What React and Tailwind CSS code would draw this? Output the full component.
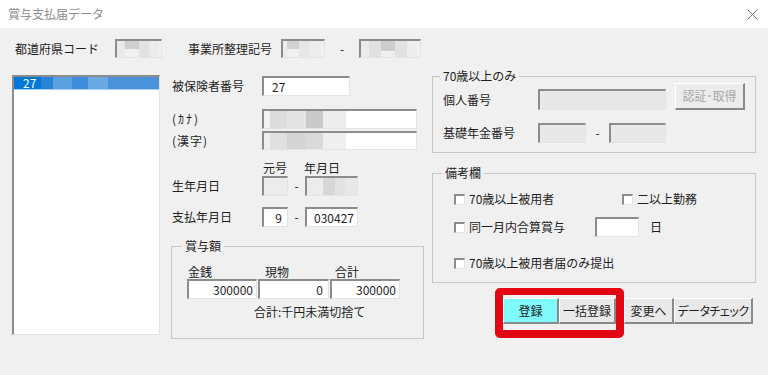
import React from "react";

const sunken =
  "box-border border-t-2 border-l-2 border-t-[#8c8c8c] border-l-[#8c8c8c] border-b border-r border-b-[#e4e4e4] border-r-[#e4e4e4]";
const raised =
  "box-border border-t border-l border-t-white border-l-white border-b-2 border-r-2 border-b-[#8a8a8a] border-r-[#8a8a8a]";

function Blocks({ items }) {
  return (
    <div className="flex h-full w-full">
      {items.map((c, i) => (
        <div key={i} className={c} />
      ))}
    </div>
  );
}

function Check({ label, className = "" }) {
  return (
    <div className={`flex items-center ${className}`}>
      <div className={`w-[11px] h-[11px] bg-white ${sunken}`} />
      <span className="ml-[4px] leading-[14px]">{label}</span>
    </div>
  );
}

export default function App() {
  return (
    <div className="w-[768px] h-[375px] overflow-hidden font-['Noto_Sans_CJK_JP','Noto_Sans',sans-serif] text-[12px] leading-[14px] text-[#1e1e1e]">
      {/* title bar */}
      <div className="h-[28px] bg-white flex items-center justify-between pl-[8px] pr-[10px]">
        <span className="text-[#8c8c8c] text-[12px]">賞与支払届データ</span>
        <svg width="11" height="11" viewBox="0 0 11 11">
          <path d="M0.5 0.5 L10.5 10.5 M10.5 0.5 L0.5 10.5" stroke="#707070" strokeWidth="1" fill="none" />
        </svg>
      </div>

      <div className="h-[347px] bg-[#f0f0f0] flex flex-col">
        {/* top row */}
        <div className="mt-[11px] h-[19px] flex items-center pl-[15px]">
          <span className="w-[100px]">都道府県コード</span>
          <div className={`w-[47px] h-[19px] bg-[#f0f0f0] ${sunken}`}>
            <Blocks
              items={[
                "w-[8px] bg-[#e9e9e9]",
                "w-[14px] bg-[#cfcfcf] h-[8px]",
                "w-[10px] bg-[#e2e2e2]",
                "w-[10px] bg-[#ececec]",
              ]}
            />
          </div>
          <span className="ml-[26px] w-[93px]">事業所整理記号</span>
          <div className={`w-[44px] h-[19px] bg-[#f0f0f0] ${sunken}`}>
            <Blocks
              items={[
                "w-[4px] bg-[#ececec]",
                "w-[12px] bg-[#d2d2d2] h-[8px]",
                "w-[10px] bg-[#e6e6e6]",
                "w-[12px] bg-[#ececec]",
              ]}
            />
          </div>
          <span className="w-[34px] text-center">-</span>
          <div className={`w-[62px] h-[19px] bg-[#f0f0f0] ${sunken}`}>
            <Blocks
              items={[
                "w-[8px] bg-[#ebebeb]",
                "w-[12px] bg-[#e0e0e0]",
                "w-[14px] bg-[#cdcdcd] h-[10px]",
                "w-[12px] bg-[#e2e2e2]",
                "w-[10px] bg-[#ededed]",
              ]}
            />
          </div>
        </div>

        {/* main */}
        <div className="mt-[11px] flex items-start">
          {/* list */}
          <div className={`ml-[12px] mt-[6px] w-[148px] h-[260px] bg-white ${sunken}`}>
            <div className="flex h-[12px] bg-[#0078d7] text-white leading-[12px]">
              <span className="pl-[9px] w-[27px]">27</span>
              <div className="w-[12px] bg-[#2a82d8]" />
              <div className="w-[19px] bg-[#5aa0e0]" />
              <div className="w-[16px] bg-[#3d8ddb]" />
              <div className="w-[20px] bg-[#6aa9e2]" />
              <div className="flex-1 bg-[#4a93da]" />
            </div>
            <div className="h-[1px] bg-[#a8d0f0]" />
          </div>

          {/* middle column */}
          <div className="ml-[11px] w-[253px] flex flex-col">
            <div className="mt-[7px] h-[20px] flex items-center">
              <span className="pl-[1px] w-[91px]">被保険者番号</span>
              <div className={`w-[88px] h-[20px] bg-white pl-[8px] flex items-center ${sunken}`}>27</div>
            </div>
            <div className="mt-[13px] h-[20px] flex items-center">
              <span className="pl-[1px] w-[91px] tracking-[2px]">(ｶﾅ)</span>
              <div className={`w-[155px] h-[20px] bg-white ${sunken}`}>
                <Blocks
                  items={[
                    "w-[6px] bg-[#f2f2f2]",
                    "w-[17px] bg-[#dcdcdc]",
                    "w-[19px] bg-[#e4e4e4]",
                    "w-[17px] bg-[#c9c9c9]",
                    "w-[23px] bg-[#ececec]",
                  ]}
                />
              </div>
            </div>
            <div className="mt-[2px] h-[19px] flex items-center">
              <span className="pl-[1px] w-[91px] tracking-[1px]">(漢字)</span>
              <div className={`w-[155px] h-[19px] bg-white ${sunken}`}>
                <Blocks
                  items={[
                    "w-[6px] bg-[#efefef]",
                    "w-[17px] bg-[#e0e0e0]",
                    "w-[19px] bg-[#d5d5d5]",
                    "w-[17px] bg-[#dadada]",
                    "w-[23px] bg-[#efefef]",
                  ]}
                />
              </div>
            </div>
            <div className="mt-[11px] h-[14px] flex">
              <span className="w-[92px]" />
              <span className="w-[41px]">元号</span>
              <span>年月日</span>
            </div>
            <div className="h-[20px] mt-[1px] flex items-center">
              <span className="pl-[1px] w-[91px]">生年月日</span>
              <div className={`w-[26px] h-[20px] bg-[#ececec] ${sunken}`} />
              <span className="w-[17px] text-center">-</span>
              <div className={`w-[53px] h-[20px] bg-[#ececec] ${sunken}`}>
                <Blocks
                  items={[
                    "w-[16px] bg-[#ececec]",
                    "w-[12px] bg-[#d7d7d7]",
                    "w-[10px] bg-[#e2e2e2]",
                    "w-[12px] bg-[#e8e8e8]",
                  ]}
                />
              </div>
            </div>
            <div className="mt-[11px] h-[20px] flex items-center">
              <span className="pl-[1px] w-[91px]">支払年月日</span>
              <div className={`w-[26px] h-[20px] bg-white pr-[5px] flex items-center justify-end ${sunken}`}>9</div>
              <span className="w-[17px] text-center">-</span>
              <div className={`w-[53px] h-[20px] bg-white pr-[3px] flex items-center justify-end ${sunken}`}>030427</div>
            </div>

            <fieldset className="mt-[12px] w-[253px] h-[100px] box-border border border-[#c6c6c6]">
              <legend className="ml-[10px] px-[3px] leading-[14px]">賞与額</legend>
              <div className="mt-[12px] h-[14px] flex pl-[16px]">
                <span className="w-[77px]">金銭</span>
                <span className="w-[70px]">現物</span>
                <span>合計</span>
              </div>
              <div className="h-[20px] flex pl-[15px] gap-[1px]">
                <div className={`w-[70px] h-[20px] bg-white pr-[3px] flex items-center justify-end ${sunken}`}>300000</div>
                <div className={`w-[71px] h-[20px] bg-white pr-[5px] flex items-center justify-end ${sunken}`}>0</div>
                <div className={`w-[70px] h-[20px] bg-white pr-[3px] flex items-center justify-end ${sunken}`}>300000</div>
              </div>
              <div className="mt-[6px] pl-[82px]">合計:千円未満切捨て</div>
            </fieldset>
          </div>

          {/* right column */}
          <div className="ml-[8px] w-[324px] flex flex-col">
            <fieldset className="w-[324px] h-[84px] box-border border border-[#c6c6c6]">
              <legend className="ml-[7px] px-[3px] leading-[14px]">70歳以上のみ</legend>
              <div className="h-[27px] flex items-end">
                <span className="w-[105px] pl-[10px] h-[21px] flex items-center">個人番号</span>
                <div className={`w-[128px] h-[21px] bg-[#e8e8e8] ${sunken}`} />
                <div className={`ml-[9px] w-[70px] h-[27px] bg-[#ececec] text-[#a8a8a8] flex items-center justify-center ${raised}`}>
                  認証･取得
                </div>
              </div>
              <div className="mt-[13px] h-[20px] flex items-center">
                <span className="w-[105px] pl-[10px]">基礎年金番号</span>
                <div className={`w-[48px] h-[20px] bg-[#e8e8e8] ${sunken}`} />
                <span className="w-[23px] text-center">-</span>
                <div className={`w-[57px] h-[20px] bg-[#e8e8e8] ${sunken}`} />
              </div>
            </fieldset>

            <fieldset className="mt-[13px] w-[324px] h-[117px] box-border border border-[#c6c6c6]">
              <legend className="ml-[9px] px-[3px] leading-[14px]">備考欄</legend>
              <div className="mt-[11px] h-[16px] flex items-center pl-[21px]">
                <Check label="70歳以上被用者" className="w-[168px]" />
                <Check label="二以上勤務" />
              </div>
              <div className="mt-[10px] h-[20px] flex items-center pl-[21px]">
                <Check label="同一月内合算賞与" className="w-[141px]" />
                <div className={`w-[44px] h-[20px] bg-white ${sunken}`} />
                <span className="ml-[11px]">日</span>
              </div>
              <div className="mt-[18px] h-[16px] flex items-center pl-[21px]">
                <Check label="70歳以上被用者届のみ提出" />
              </div>
            </fieldset>

            <div className="mt-[5px] ml-[63px] flex items-start">
              <div className="w-[129px] h-[50px] box-border border-[8px] border-t-[7px] border-[#e30613] rounded-[5px] pt-[3px] flex items-start">
                <div className={`w-[56px] h-[26px] bg-[#80fbfb] flex items-center justify-center ${raised}`}>登録</div>
                <div className={`w-[57px] h-[26px] bg-[#e9e9e9] flex items-center justify-center ${raised}`}>一括登録</div>
              </div>
              <div className={`mt-[10px] w-[50px] h-[26px] bg-[#e9e9e9] flex items-center justify-center ${raised}`}>変更へ</div>
              <div className={`mt-[10px] w-[79px] h-[26px] bg-[#e9e9e9] flex items-center justify-center whitespace-nowrap tracking-[-0.5px] [font-feature-settings:'palt'] ${raised}`}>
                データチェック
              </div>
            </div>
          </div>
        </div>
      </div>
    </div>
  );
}
